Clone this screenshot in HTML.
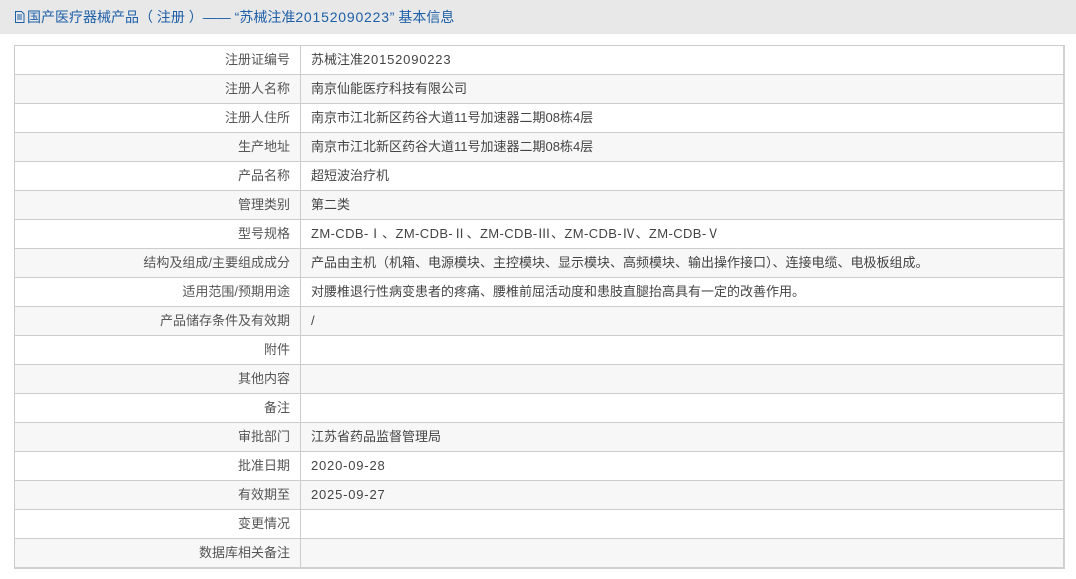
<!DOCTYPE html>
<html><head><meta charset="utf-8"><style>
body{margin:0;background:#fff;font-family:"Liberation Sans","Noto Sans CJK SC",sans-serif;width:1076px;height:579px;overflow:hidden}
.hd{height:34px;background:#e8e8e8;color:#1d5fa8;font-size:14px;line-height:34px;padding-left:14px}
.n{letter-spacing:0.8px}
.m{letter-spacing:0.4px}
table{position:absolute;left:14px;top:45px;width:1051px;border-collapse:collapse;border:1px solid #ccc;border-right:2px solid #d0d0d0;border-bottom:2px solid #d0d0d0;font-size:13px;color:#444}
td{height:28px;border:1px solid #ccc;padding:0 10px;line-height:28px;white-space:nowrap}
td.l{width:265px;text-align:right;color:#555}
tr:nth-child(even) td{background:#f7f7f7}
</style></head><body>
<div class="hd"><svg width="11" height="12" viewBox="0 0 11 12" style="vertical-align:-1px;margin-right:2px"><path d="M1.5 .5h6l2.5 2.5v8.5h-8.5z M3 4h5 M3 6h5 M3 8h5" fill="none" stroke="#1d5fa8" stroke-width="1"/></svg>国产医疗器械产品（ 注册 ）—— “苏械注准<span class="n">20152090223</span>” 基本信息</div>
<table>
<tr><td class="l">注册证编号</td><td>苏械注准<span class="n">20152090223</span></td></tr>
<tr><td class="l">注册人名称</td><td>南京仙能医疗科技有限公司</td></tr>
<tr><td class="l">注册人住所</td><td>南京市江北新区药谷大道11号加速器二期08栋4层</td></tr>
<tr><td class="l">生产地址</td><td>南京市江北新区药谷大道11号加速器二期08栋4层</td></tr>
<tr><td class="l">产品名称</td><td>超短波治疗机</td></tr>
<tr><td class="l">管理类别</td><td>第二类</td></tr>
<tr><td class="l">型号规格</td><td class="m">ZM-CDB-Ⅰ、ZM-CDB-Ⅱ、ZM-CDB-Ⅲ、ZM-CDB-Ⅳ、ZM-CDB-Ⅴ</td></tr>
<tr><td class="l">结构及组成/主要组成成分</td><td>产品由主机（机箱、电源模块、主控模块、显示模块、高频模块、输出操作接口）、连接电缆、电极板组成。</td></tr>
<tr><td class="l">适用范围/预期用途</td><td>对腰椎退行性病变患者的疼痛、腰椎前屈活动度和患肢直腿抬高具有一定的改善作用。</td></tr>
<tr><td class="l">产品储存条件及有效期</td><td>/</td></tr>
<tr><td class="l">附件</td><td></td></tr>
<tr><td class="l">其他内容</td><td></td></tr>
<tr><td class="l">备注</td><td></td></tr>
<tr><td class="l">审批部门</td><td>江苏省药品监督管理局</td></tr>
<tr><td class="l">批准日期</td><td class="n">2020-09-28</td></tr>
<tr><td class="l">有效期至</td><td class="n">2025-09-27</td></tr>
<tr><td class="l">变更情况</td><td></td></tr>
<tr><td class="l">数据库相关备注</td><td></td></tr>
</table>
</body></html>
